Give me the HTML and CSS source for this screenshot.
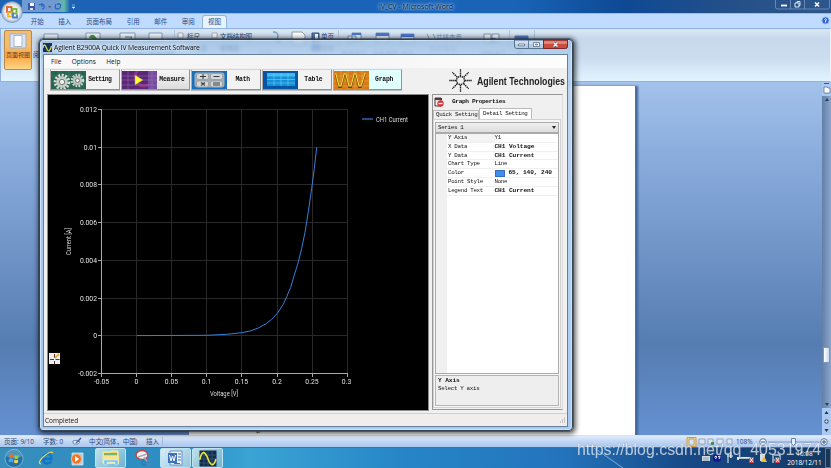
FILE: index.html
```html
<!DOCTYPE html>
<html lang="zh-CN">
<head>
<meta charset="utf-8">
<title>IV_CV - Microsoft Word</title>
<link rel="stylesheet" href="styles.css">
</head>
<body>
<div class="desktop">
  <header class="word-title">
    <div class="quick-access">
      <svg width="50" height="13" viewBox="0 0 50 13">
        <path d="M2 3h7v7H2z" fill="#3c55a5"/><path d="M4 3h4v3H4z" fill="#fff"/><path d="M4 8h3v2H4z" fill="#dde"/>
        <path d="M13 5l3-1v3M13 5q4-2 5 1t-2 3" fill="none" stroke="#2e63c9" stroke-width="1.3"/>
        <path d="M22 6l2 2 1-2z" fill="#456"/>
        <path d="M30 4q-2 5 1.500 5t3-5M34 4h-3" fill="none" stroke="#2e63c9" stroke-width="1.300"/>
        <path d="M46 5h3M46 7l1.500 1.500 1.500-1.500z" fill="#dfeaff" stroke="#dfeaff" stroke-width=".5"/>
      </svg>
    </div>
    <div class="word-name">IV_CV - Microsoft Word</div>
    <svg class="word-controls" width="55" height="10" viewBox="0 0 55 10">
      <path d="M.5 0v7q0 2 2 2h50q2 0 2-2V0M15.500 0v9M29.500 0v9" fill="none" stroke="#7896be" stroke-width=".8"/>
      <path d="M6 5.500h6" stroke="#fff" stroke-width="1.800"/>
      <path d="M20 3h4v4h-4zM22 3V1.500h3v4h-1" fill="none" stroke="#dbe6f4" stroke-width="1"/>
      <path d="M40 2.500l4 4M44 2.500l-4 4" stroke="#fff" stroke-width="1.500"/>
    </svg>
  </header>
  <nav class="word-tabs">
    <span>开始</span><span>插入</span><span class="wide">页面布局</span><span>引用</span><span>邮件</span><span>审阅</span><span class="active">视图</span>
    <svg class="help" width="9" height="9" viewBox="0 0 9 9"><circle cx="4.500" cy="4.500" r="3.600" fill="#2d61c8" stroke="#a0bbe8"/><path d="M3.500 3.500q1-1.500 2 0L4.500 5v1.500" fill="none" stroke="#fff"/></svg>
  </nav>
  <section class="ribbon">
    <div class="view-button"><svg width="18" height="16" viewBox="0 0 18 16"><path d="M1 1h16v14H1z" fill="#dce4f2" stroke="#9bb0cf"/><path d="M5 2.500h8v11H5z" fill="#fff" stroke="#a8b6c8"/></svg><span>页面视图</span></div>
    <div class="ribbon-rest">
      <svg width="240" height="52" viewBox="33 29 240 52">
        <g stroke="#7e98b8" fill="#eef4fb"><path d="M44 33h14v7H44zM86 32h14v8H86zM120 32h15v8h-15zM149 32h13v8h-13z"/></g>
        <path d="M89 37q1-4 5-3l4 5z" fill="#4d9e49"/><path d="M125 36h7l-3 4" fill="none" stroke="#5477a4"/>
        <path d="M174.500 29v50" stroke="#b2c9e4"/>
        <g fill="#f8f9fb" stroke="#9caabf"><path d="M178 32h5v5h-5zM212 32h5v5h-5z"/></g>
        <g class="ribbon-text"><text x="33" y="56">阅读版式</text><text x="78" y="56">Web 版式</text><text x="118" y="56">大纲视图</text><text x="149" y="56">普通视图</text><text x="187" y="38">标尺</text><text x="220" y="38" textLength="32">文档结构图</text><text x="187" y="50">网格线</text><text x="220" y="50">缩略图</text><text x="259" y="56">显示</text></g>
      </svg>
      <svg width="290" height="52" viewBox="273 29 290 52">
        <circle cx="274" cy="35" r="4" fill="#c9dff3" stroke="#809cc0" stroke-width="1.500"/><path d="M277 38l3 4" stroke="#8791a5" stroke-width="2"/>
        <path d="M292 31h10l3 3v9h-13z" fill="#fff" stroke="#8d99ab"/>
        <path d="M312 32h7v8h-7zM312 44h8v6h-8z" fill="#5879ae" stroke="#365885"/><path d="M315 33h3v6h-3z" fill="#fff"/>
        <path d="M338.500 29v50M509.500 29v50M534.500 29v50" stroke="#aec4df"/>
        <path d="M352 32h9v7h-9zM348 35h8v6h-8zM376 32h13v9h-13zM401 33h13v9h-13z" fill="#edf3fb" stroke="#7893bd"/><path d="M376 32h13v3h-13zM401 33h13v3h-13zM352 32h9v2h-9z" fill="#4878cf"/><path d="M359 38l4 2-3 2z" fill="#edbb2f"/>
        <path d="M484 33h7v8h-7zM492 33h7v8h-7z" fill="#edf3fa" stroke="#8190a5"/><path d="M490 37l6 0-2 4z" fill="#466dad"/>
        <path d="M515 35h13v7h-13z" fill="#9ab5dc" stroke="#5b7ab1"/><path d="M515 35h13v3h-13z" fill="#507cca"/>
        <path d="M427 33l2 4v3M433 33l2 4v3" fill="none" stroke="#8a9aad"/>
        <g class="ribbon-text"><text x="321" y="38">单页</text><text x="321" y="50">双页</text><text x="341" y="56">新建窗口</text><text x="372" y="56">全部重排</text><text x="401" y="56">拆分</text><text x="436" y="39" opacity=".5">并排查看</text><text x="430" y="51" opacity=".5">同步滚动</text><text x="480" y="56">切换窗口</text><text x="517" y="56">宏</text></g>
      </svg>
    </div>
  </section>
  <main class="workspace">
    <div class="canvas"><div class="page"><span>↵</span></div></div>
    <div class="scrollbar">
      <svg width="9" height="14" viewBox="0 0 9 14"><path d="M2 1h5v1H2z" fill="#456"/><path d="M2 5h3l1 1h2v5H2z" fill="#fff" stroke="#5d7292" stroke-width=".8"/></svg>
      <div class="scroll-track"><b class="arrow-up"></b><i></i><b class="arrow-down"></b></div>
      <svg width="9" height="27" viewBox="0 0 9 27"><path d="M2.500 6l2-3 2 3zM2.500 21l2 3 2-3z" fill="#22354d"/><circle cx="4.500" cy="13.500" r="1.700" fill="#e5edf6" stroke="#273b57"/></svg>
    </div>
  </main>
  <footer class="word-status">
    <span class="s-page">页面: 9/10</span><span class="s-words">字数: 0</span>
    <svg class="proof" width="20" height="12" viewBox="0 0 20 12"><path d="M4 5q3-2 7 1-3 4-7 1z" fill="#f9fcff" stroke="#667fab"/><path d="M7 7l5-5" stroke="#345bac" stroke-width="1.500"/></svg>
    <span class="s-lang">中文(简体，中国)</span><span class="s-mode">插入</span>
    <div class="view-tools">
      <svg width="50" height="12" viewBox="0 0 50 12"><path d="M1 1.500h9v9H1z" fill="#ffd589" stroke="#d79932"/><g fill="#dbe5f0" stroke="#899bb2" stroke-width=".8"><path d="M3 3h5v6H3zM13 3h6v5h-6zM22 3h5v5h-5zM31 3h6q1 3-1 5h-5zM41 3h5v5h-5z"/></g><path d="M25 6h3v3h-3z" fill="#4a8d4d"/></svg>
      <span>108%</span>
      <svg width="72" height="12" viewBox="0 0 72 12"><path d="M10 6h51" stroke="#829bc3"/><circle cx="5" cy="6" r="3.300" fill="#eef4fb" stroke="#60799d"/><circle cx="66" cy="6" r="3.300" fill="#eef4fb" stroke="#60799d"/><path d="M3 6h4M64 6h4M66 4v4" stroke="#34547f"/><path d="M33.500 2.500h4v5l-2 2-2-2z" fill="#e6effa" stroke="#6883a9"/></svg>
    </div>
  </footer>
  <footer class="taskbar">
    <svg class="launch" width="95" height="21" viewBox="0 0 95 21">
      <circle cx="14" cy="10.500" r="9" fill="#2571a5" stroke="#80bed9" stroke-width=".8"/><path d="M6 8a8 7 0 0 1 16 0q-8 5-16 0" fill="#82bed5" opacity=".45"/>
      <path d="M9.500 7q2-1.500 4 0v3q-2-1.500-4.500 0z" fill="#f06a2a"/><path d="M14.500 7q2 1.500 4.500 0l-1 3.500q-2 1-3.500 0z" fill="#96cf45"/><path d="M9 11q2-1.500 4.200 0v3.500q-2-1.500-4.700 0z" fill="#45a9ef"/><path d="M14.500 11.500q2 1.300 3.500 0v3q-2 1.500-4 0z" fill="#ffd247"/>
      <path d="M51.500 13.500q-5 4.500-9-1-1-5 4-6.500 5-.5 5 5h-8" fill="none" stroke="#0c78cc" stroke-width="2.300"/><path d="M41 16q-4-1 2-7 8-7 10-4" fill="none" stroke="#f4d34a" stroke-width="1.200"/>
      <path d="M72 5h11v12H72z" fill="#a8d4ed" stroke="#dceff8" stroke-width=".7"/><circle cx="76.500" cy="11" r="5" fill="#ef7426" stroke="#f9b37b"/><path d="M75 8l4 3-4 3z" fill="#fff"/>
    </svg>
    <div class="task"><svg width="20" height="18" viewBox="0 0 20 18"><path d="M2 3h7l1-1h7v12H2z" fill="#f0d267" stroke="#fff1a3"/><path d="M3 4h13v2H3z" fill="#75b477"/><path d="M4 7h14v8H2V8z" fill="#f9e494"/><path d="M3 16v-5h14v5h-3v-3H6v3z" fill="#79c4eb" stroke="#d7f3ff" stroke-width=".5"/></svg></div>
    <svg class="snip" width="34" height="21" viewBox="0 0 34 21"><ellipse cx="16" cy="7" rx="6" ry="4.500" fill="#f5f6f6" stroke="#c5434c" stroke-width="1.500"/><path d="M12 9l9-3M18 9l3 5" stroke="#9caab5" stroke-width="1.500"/><circle cx="18" cy="15" r="2" fill="none" stroke="#287bb6" stroke-width="1.300"/><circle cx="23" cy="15" r="2" fill="none" stroke="#4c87b3" stroke-width="1.300"/></svg>
    <div class="task word-task"><svg width="17" height="18" viewBox="0 0 17 18"><path d="M3 2h12v14H3z" fill="#edf4fb" stroke="#7090bc"/><path d="M1 4h9v10H1z" fill="#3b73bf"/><path d="M2.500 6l1.500 6 1.500-5 1.500 5 1.500-6" fill="none" stroke="#fff" stroke-width="1"/><path d="M11 5h3M11 8h3M11 11h3M7 14.500h6" stroke="#466ca9"/></svg></div>
    <div class="task"><svg width="18" height="17" viewBox="0 0 18 17"><path d="M.5.500h17v16H.5z" fill="#142b4c"/><path d="M5 0v17M9 0v17M13 0v17M0 5h18M0 9h18M0 13h18" stroke="#416588" stroke-width=".6"/><path d="M0 9h1C3 0 6 1 9 9s6 7 8 0" fill="none" stroke="#e8e63a" stroke-width="1.600"/></svg></div>
    <div class="tray">
      <svg width="84" height="18" viewBox="0 0 84 18"><path d="M2 7h8v5H2z" fill="#d4dbe1"/><path d="M3 9h6M3 11h6" stroke="#5b738e" stroke-width=".6"/><circle cx="17" cy="9" r="4" fill="#101a8c"/><path d="M14.500 8q2-2 2 0l-1 2M18 8q2-2 2 0l-1 2" fill="none" stroke="#fff"/><path d="M27 7h6M28 4v10M31 3v6" stroke="#e8edf2"/><path d="M37 9h12M38 8v3" stroke="#fff" stroke-width="1.500"/><path d="M49 8h5v6h-5z" fill="#d33d42"/><path d="M50 9l3 4M53 9l-3 4" stroke="#fff"/><path d="M60 5h5v7h-5z" fill="#d6dfe6"/><path d="M61 13l3-6 3 6z" fill="#ecc02b"/><path d="M73 5v9M74 6h6v5h-6" stroke="#fff" fill="none"/><path d="M75 8h5v6h-5z" fill="#d33d42"/><path d="M76 9l3 4M79 9l-3 4" stroke="#fff"/></svg>
      <div class="clock"><span>16:08</span><span>2018/12/11</span></div>
      <div class="show-desktop"></div>
    </div>
  </footer>

  <svg class="office-orb" width="24" height="24" viewBox="0 0 24 24"><defs><radialGradient id="orb"><stop stop-color="#fff"/><stop offset=".7" stop-color="#e5e8ee"/><stop offset="1" stop-color="#a3b1c4"/></radialGradient></defs><circle cx="12" cy="12" r="10.500" fill="url(#orb)" stroke="#6f8fbd" stroke-width=".7"/><g fill="none" stroke-width="1.800"><rect x="7" y="7" width="4.500" height="5" stroke="#e85d24"/><rect x="12.500" y="9" width="4" height="4.500" stroke="#74b52d"/><rect x="8" y="12.500" width="4" height="4" stroke="#f6ae20"/><path d="M13 12.500v5h4v-3" stroke="#3d85d4"/></g></svg>

  <section class="agilent">
    <header class="app-title">
      <svg width="9" height="9" viewBox="0 0 9 9"><path d="M0 0h9v9H0z" fill="#17325a"/><path d="M0 5q1-5 2.500-2l2 4q2 3 4-4" fill="none" stroke="#e2df41" stroke-width="1.200"/></svg>
      <h1>Agilent B2900A Quick IV Measurement Software</h1>
      <svg class="app-controls" width="54" height="9" viewBox="0 0 54 9"><path d="M.5 0v6q0 2.500 2 2.500h49q2 0 2-2.500V0z" fill="#b5cbe3" stroke="#58718f"/><path d="M29.500 0h24v6q0 2.500-2 2.500h-22z" fill="#cb4d3e" stroke="#752a2d"/><path d="M30 1h23v3H30z" fill="#e09a8b" opacity=".75"/><path d="M1 1h28v3H1z" fill="#e1eaf4" opacity=".6"/><path d="M14.500 0v8.500" stroke="#657d9b"/><path d="M4.500 4h6v1.800h-6zM19.500 2.500h6v4h-6zM21.500 4h2v1h-2z" fill="#fff" stroke="#4b5e77" stroke-width=".7"/><path d="M39.500 2.500l4 4M43.500 2.500l-4 4" stroke="#693533" stroke-width="2.600"/><path d="M39.500 2.500l4 4M43.500 2.500l-4 4" stroke="#fff" stroke-width="1.500"/></svg>
    </header>
    <div class="client">
      <nav class="menu"><span>File</span><span>Options</span><span>Help</span></nav>
      <div class="toolbar">
        <div class="tool"><svg width="35" height="18" viewBox="0 0 35 18"><path d="M0 0h35v18H0z" fill="#276652"/><path d="M0 5h35M0 11h35M8 0v18M18 0v18M29 0v18" stroke="#4a8970" stroke-width=".5"/><circle cx="11" cy="11" r="6.800" fill="none" stroke="#dedfda" stroke-width="3" stroke-dasharray="2 1.500"/><circle cx="11" cy="11" r="5.700" fill="#c7ccc6"/><circle cx="11" cy="11" r="2.700" fill="#eef0ed" stroke="#758078"/><circle cx="26.500" cy="9.500" r="5.500" fill="none" stroke="#d3d8d3" stroke-width="2.500" stroke-dasharray="1.700 1.200"/><circle cx="26.500" cy="9.500" r="4.600" fill="#bec7be"/><circle cx="26.500" cy="9.500" r="2" fill="#eceeeb" stroke="#6d7c72"/></svg><span class="tight">Setting</span></div>
        <div class="tool hover"><svg width="35" height="18" viewBox="0 0 35 18"><path d="M0 0h35v18H0z" fill="#592775"/><circle cx="22" cy="6" r="9" fill="none" stroke="#a9368c" stroke-width="3" opacity=".7"/><path d="M26 0v18h9V0z" fill="#764c9e"/><path d="M0 5h35M0 9h35M0 14h35M6 0v18M30 0v18" stroke="#a076bb" stroke-width=".5"/><path d="M13 4l8 5-8 5z" fill="#ffff3b" stroke="#a48a54" stroke-width=".5"/></svg><span>Measure</span></div>
        <div class="tool"><svg width="35" height="18" viewBox="0 0 35 18"><path d="M0 0h35v18H0z" fill="#1870bd"/><rect x="2.500" y="1.500" width="30" height="15" rx="3" fill="#a8adb1"/><g fill="#d5d7d8" stroke="#858e94" stroke-width=".6"><rect x="4.500" y="2.500" width="12" height="6" rx="2"/><rect x="18.500" y="2.500" width="12" height="6" rx="2"/><rect x="4.500" y="10" width="12" height="6" rx="2"/><rect x="18.500" y="10" width="12" height="6" rx="2"/></g><path d="M8 5.500h6M11 3v5M21.500 5.500h6M9 11.500l4 3M13 11.500l-4 3M21 12h7M21 14h7" stroke="#353c42" stroke-width="1.100"/></svg><span>Math</span></div>
        <div class="tool"><svg width="35" height="18" viewBox="0 0 35 18"><path d="M0 0h35v18H0z" fill="#0754a3"/><path d="M4 2h28v13H4z" fill="#158fd7"/><path d="M4 2h28v3H4z" fill="#3bb9ea"/><path d="M4 5h28M4 8.500h28M4 12h28M11 2v13M18 2v13M25 2v13" stroke="#66d5f3" stroke-width=".6"/></svg><span>Table</span></div>
        <div class="tool selected"><svg width="35" height="18" viewBox="0 0 35 18"><path d="M0 0h35v18H0z" fill="#da7918"/><path d="M0 5h35M0 10h35M0 15h35M7 0v18M14 0v18M21 0v18M28 0v18" stroke="#edb14c" stroke-width=".5"/><path d="M1 4h1l3 12h2l3-12h2l3 12h2l3-12h2l3 12h2l4-13" fill="none" stroke="#594519" stroke-width="1.800"/><path d="M1 3h1l3 12h2l3-12h2l3 12h2l3-12h2l3 12h2l4-13" fill="none" stroke="#ffdc31" stroke-width="1.200"/></svg><span>Graph</span></div>
        <svg class="brand" width="118" height="24" viewBox="448 69 118 24"><g stroke="#181818" stroke-width="1.300" stroke-dasharray="1.500 .6"><path d="M460.500 76V69M460.500 85v7M456 80.500h-7M465 80.500h7"/><path d="M457.300 77.300l-5-5M463.700 77.300l5-5M457.300 83.700l-5 5M463.700 83.700l5 5"/></g><circle cx="460.500" cy="80.500" r="4" fill="none" stroke="#222" stroke-width="1.400" stroke-dasharray="1.500 .7"/><text x="477" y="84.500" textLength="88" lengthAdjust="spacingAndGlyphs">Agilent Technologies</text></svg>
      </div>
      <div class="body">
        <svg class="plot" width="380" height="315" viewBox="48 95 380 315">
          <g stroke="#292929"><path d="M136.500 109v265M171.500 109v265M206.500 109v265M241.500 109v265M277.500 109v265M312.500 109v265M347.500 109v265M101 109.500h246M101 147.500h246M101 184.500h246M101 222.500h246M101 260.500h246M101 298.500h246M101 335.500h246"/></g>
          <path d="M101.500 109v268M98 373.500h249.500M98 109.500h4M98 147.500h4M98 184.500h4M98 222.500h4M98 260.500h4M98 298.500h4M98 335.500h4M136.500 373v4M171.500 373v4M206.500 373v4M241.500 373v4M277.500 373v4M312.500 373v4M347.500 373v4" fill="none" stroke="#aaa"/>
          <path d="M136.700 335.600L206.500 335.300 226.700 334.300 241.700 332.700 250 331 258.300 328 266.700 323.300 271.700 319.300 277.300 313.300 283.300 304.300 286.700 296.700 290.700 287.300 294.300 275 297.700 264.300 301.700 248.300 305 232.300 308.300 211.700 311.700 188.300 314.300 168.300 316.700 147.300" fill="none" stroke="#387fd8"/>
          <g class="y-labels"><text x="97" y="112">0.012</text><text x="97" y="149.700">0.01</text><text x="97" y="187.300">0.008</text><text x="97" y="225">0.006</text><text x="97" y="263">0.004</text><text x="97" y="300.700">0.002</text><text x="97" y="338">0</text><text x="97" y="376">-0.002</text></g>
          <g class="x-labels"><text x="101.500" y="384">-0.05</text><text x="136.500" y="384">0</text><text x="171.500" y="384">0.05</text><text x="206.500" y="384">0.1</text><text x="241.500" y="384">0.15</text><text x="277" y="384">0.2</text><text x="312" y="384">0.25</text><text x="346.500" y="384">0.3</text></g>
          <text class="axis-title" x="210" y="395.500" textLength="28" lengthAdjust="spacingAndGlyphs">Voltage [V]</text>
          <text class="axis-title" transform="translate(70.500 255) rotate(-90)" textLength="27" lengthAdjust="spacingAndGlyphs">Current [A]</text>
          <path d="M362 119h11" stroke="#387fd8" stroke-width="1.200"/><text class="axis-title" x="376" y="121.500" textLength="32" lengthAdjust="spacingAndGlyphs">CH1 Current</text>
          <path d="M49 353h11v11H49z" fill="#eee"/><path d="M50 359.500h4M55.500 359.500h4M54.500 354v4M54.500 361v3" stroke="#6c2b2b"/><path d="M55 358l4-4" stroke="#e5b127" stroke-width="2"/>
        </svg>
        <aside class="properties">
          <div class="prop-title"><svg width="10" height="10" viewBox="0 0 10 10"><path d="M1 1h6v8H1z" fill="#eee" stroke="#493345"/><path d="M1 1h7v2H1z" fill="#593641"/><circle cx="6.500" cy="6.500" r="3.200" fill="#d83838"/><path d="M4.500 6.500h4" stroke="#fff" stroke-width="1.300"/></svg><h2>Graph Properties</h2></div>
          <div class="prop-tabs"><span>Quick Setting</span><span class="current">Detail Setting</span></div>
          <div class="tab-body">
            <div class="combo"><span>Series 1</span><b></b></div>
            <div class="grid">
              <div class="row first"><span>Y Axis</span><em>Y1</em></div>
              <div class="row"><span>X Data</span><strong>CH1 Voltage</strong></div>
              <div class="row"><span>Y Data</span><strong>CH1 Current</strong></div>
              <div class="row"><span>Chart Type</span><em>Line</em></div>
              <div class="row"><span>Color</span><i class="swatch"></i><strong>65, 140, 240</strong></div>
              <div class="row"><span>Point Style</span><em>None</em></div>
              <div class="row"><span>Legend Text</span><strong>CH1 Current</strong></div>
            </div>
            <div class="description"><strong>Y Axis</strong><span>Select Y axis</span></div>
          </div>
        </aside>
      </div>
      <footer class="app-status"><span>Completed</span><svg width="7" height="7" viewBox="0 0 7 7"><path d="M5 1h1M3 3h1M5 3h1M1 5h1M3 5h1M5 5h1" stroke="#9b9b9b" stroke-width="1.200"/></svg></footer>
    </div>
  </section>
  <svg class="watermark" width="250" height="22" viewBox="0 0 250 22"><text x="1" y="15" textLength="244" lengthAdjust="spacingAndGlyphs">https://blog.csdn.net/qq_40531974</text></svg>
</div>
</body>
</html>
```
FILE: styles.css
```css
* { box-sizing: border-box; }
body { margin: 0; overflow: hidden; }
svg { display: block; flex-shrink: 0; }
span, strong, em, h1, h2 { white-space: nowrap; }
.desktop {
  position: relative;
  width: 831px;
  height: 468px;
  display: flex;
  flex-direction: column;
  overflow: hidden;
  font-family: "Open Sans", "Noto Sans CJK SC", sans-serif;
  font-size: 6.5px;
}

.word-title {
  height: 13px;
  display: flex;
  align-items: flex-start;
  background: linear-gradient(90deg, #1d62b4, #1a63b9 30%, #1964b7 62%, #0e4994 75%, #245089 88%, #2d568c);
}
.quick-access {
  width: 68px;
  height: 12px;
  margin-left: 22px;
  padding-left: 4px;
  border-radius: 0 0 8px 0;
  background: linear-gradient(90deg, #6f9bd2 0 34px, #61b9a4 42px, transparent 48px);
}
.word-name {
  width: 80px;
  margin-left: 286px;
  text-align: center;
  font-size: 7px;
  line-height: 13px;
  white-space: nowrap;
  color: #0b1a30;
  text-shadow: 0 0 2px #a9c5e8, 0 0 3px #a9c5e8, 0 0 5px #a9c5e8;
}
.word-controls { margin-left: 319px; }

.word-tabs {
  height: 15px;
  padding-left: 23.5px;
  display: flex;
  align-items: flex-end;
  background: #bfdbff;
  border-top: 1px solid #9bbce8;
  color: #294d87;
  line-height: 13px;
}
.word-tabs span { width: 27.5px; text-align: center; }
.word-tabs .wide { width: 41px; }
.word-tabs .active { width: 25px; line-height: 12px; background: #e9f3fd; border: 1px solid #93b5df; border-bottom: 0; border-radius: 3px 3px 0 0; }
.help { margin: 0 1px 3px auto; }

.ribbon {
  height: 54px;
  display: flex;
  padding: 1px 1px 0 3px;
  border: 1px solid #8db2e3;
  border-right-color: #e7f2ff;
  background: linear-gradient(#dbe7f4, #c9d9ed 18%, #cbdcef 55%, #e2f4ff);
}
.view-button {
  width: 28px;
  height: 40px;
  display: flex;
  flex-direction: column;
  align-items: center;
  gap: 1px;
  padding-top: 2px;
  border: 1px solid #b48a4f;
  border-radius: 2px;
  background: linear-gradient(#f3bc70, #f7bd68 40%, #faa43f 65%, #fbd686);
  color: #51452f;
  font-size: 6px;
}
.ribbon-rest { display: flex; margin-left: 1px; }
.ribbon-text { font-size: 6.5px; fill: #27436e; }

.workspace { height: 353px; display: flex; }
.canvas {
  flex: 1;
  padding: 4px 0 0 189px;
  background: linear-gradient(#a3c2eb, #8badde 20%, #567db1 74%, #6591d1);
}
.page {
  width: 447px;
  height: 349px;
  background: #fff;
  border-right: 1px solid #5c6f8d;
  box-shadow: 2px 0 2px #41669a;
  display: flex;
  align-items: flex-end;
  padding-left: 67px;
  color: #444;
}
.page span { font-size: 6px; line-height: 6px; }
.scrollbar { width: 9px; background: #a9c8f2; display: flex; flex-direction: column; }
.scroll-track { flex: 1; display: flex; flex-direction: column; align-items: center; background: linear-gradient(90deg, #627fa8, #8aa5ca); }
.scroll-track i { width: 7px; height: 16px; margin-top: 246px; border: 1px solid #7c98bb; background: linear-gradient(90deg, #fff, #c8d9ed); }
.arrow-up, .arrow-down { width: 0; height: 0; border: 2px solid transparent; }
.arrow-up { border-bottom: 3px solid #263e61; }
.arrow-down { margin-top: auto; border-top: 3px solid #263e61; }

.word-status {
  height: 12px;
  display: flex;
  align-items: center;
  padding-left: 4px;
  background: linear-gradient(#e1ecfc, #c3d8f5 45%, #aac7ef);
  border-top: 1px solid #d2e3fa;
  color: #294875;
  line-height: 10px;
}
.s-page { width: 39px; }
.s-words { width: 26px; }
.s-lang { width: 57px; letter-spacing: -.1px; }
.s-mode { width: 17px; border-right: 1px solid #a3bee1; }
.view-tools { margin-left: auto; padding-right: 1px; display: flex; align-items: center; }
.view-tools span { width: 22px; font-size: 6.5px; }

.taskbar {
  height: 21px;
  display: flex;
  align-items: center;
  border-top: 1px solid #456f9d;
  background:
    linear-gradient(35deg, transparent 69%, rgba(184,222,255,.5) 70%, transparent 72%) 540px 0 / 90px 21px no-repeat,
    linear-gradient(90deg, #378dbb, #2a8fc4 22%, #3ba4d4 30%, #2786c7 48%, #2373bc 68%, #174a88 82%, #123963);
}
.task {
  width: 31px;
  height: 20px;
  display: flex;
  align-items: center;
  justify-content: center;
  border: 1px solid #c0e3f1;
  border-radius: 2px;
  background: linear-gradient(135deg, #bfe0ea, #6eb3d1);
}
.word-task { margin-right: 1px; background: linear-gradient(135deg, #d8ecf5, #94c6df); }
.tray { margin-left: auto; display: flex; align-items: center; gap: 2px; color: #fff; }
.clock { width: 37px; display: flex; flex-direction: column; align-items: center; font-size: 6.5px; line-height: 9px; }
.show-desktop { width: 6px; height: 20px; border: 1px solid #5b7591; background: #193655; }
.office-orb { position: absolute; left: 0; top: 0; }

.agilent {
  position: absolute;
  left: 39px;
  top: 39px;
  width: 534px;
  height: 392px;
  padding: 1px 4px 4px 3px;
  border: 1px solid #354350;
  border-radius: 4px;
  background: linear-gradient(180deg, rgba(153,187,223,.72), rgba(177,207,239,.84) 15px, #a8cbf0);
  backdrop-filter: blur(1.5px);
  box-shadow: 0 0 0 .5px #273543, 1px 1px 5px 2px rgba(0,0,0,.6), inset 0 0 0 1px rgba(222,240,255,.65);
}
.app-title { height: 13px; display: flex; align-items: center; }
.app-title h1 { margin: 0 0 0 2px; font-size: 6.8px; font-weight: 400; color: #101010; letter-spacing: -.13px; text-shadow: 0 0 4px #fff, 0 0 5px #fff; }
.app-controls { align-self: flex-start; margin: -1px 0 0 auto; }
.client { height: 373px; display: flex; flex-direction: column; background: #f0f0f0; border: 1px solid #667f9b; color: #111; }
.menu { height: 13px; padding: 0 7px; display: flex; align-items: center; gap: 10.5px; background: linear-gradient(90deg, #fafafa, #f3f3f3 45%, #fdfdfd); }
.toolbar { height: 27px; padding: 1px 0 0 6px; display: flex; gap: 1px; }
.tool {
  width: 69.7px;
  height: 21px;
  display: flex;
  align-items: center;
  border: 1px solid;
  border-color: #d4d4d4 #929292 #929292 #aaa;
  box-shadow: 0 1px 0 #bbb;
  background: #f2f2f2;
}
.tool span { flex: 1; text-align: center; font: bold 6.4px/8px "Liberation Mono", monospace; letter-spacing: -.2px; padding-right: 2px; }
.tool span.tight { letter-spacing: -.55px; padding-right: 5px; }
.tool.hover { background: linear-gradient(#f5f5f5, #ddd); }
.tool.selected { background: #e0ffff; }
.brand { margin-left: 45px; overflow: visible; }
.brand text { font: bold 10.5px "Liberation Sans", sans-serif; fill: #222; }
.body { height: 318px; display: flex; gap: 4px; padding-left: 4px; }
.plot { background: #000; outline: 1px solid #8b8b8b; }
.y-labels, .x-labels { font: 6.8px Roboto, "Liberation Sans", sans-serif; fill: #e2e2e2; }
.y-labels { text-anchor: end; }
.x-labels { text-anchor: middle; }
.axis-title { font: 6.4px Roboto, "Liberation Sans", sans-serif; fill: #ddd; }

.properties {
  width: 131px;
  height: 316px;
  margin-top: -1px;
  border: 1px solid #969696;
  border-right-color: #ddd;
  font: 5.8px/8px "Liberation Mono", monospace;
  letter-spacing: -.3px;
}
.prop-title { height: 13px; display: flex; align-items: center; padding-left: 1px; gap: 8px; }
.prop-title h2 { margin: 0; font-size: 6.2px; letter-spacing: -.38px; }
.prop-tabs { height: 11px; display: flex; align-items: flex-end; }
.prop-tabs span { width: 46px; height: 9px; padding-left: 2px; border: 1px solid #bbb; border-bottom: 0; }
.prop-tabs .current { width: 53px; height: 11px; padding: 1px 0 0 3px; background: #fff; }
.tab-body { width: 128px; height: 289px; padding: 2px 1px; border: 1px solid #d2d2d2; background: #f6f6f6; }
.combo { height: 11px; display: flex; align-items: center; justify-content: space-between; padding: 0 2px; border: 1px solid #aaa; background: linear-gradient(#efefef, #ddd); }
.combo b { border: 2px solid transparent; border-top: 3px solid #222; border-bottom: 0; }
.grid { height: 241px; border: 1px solid #aaa; background: linear-gradient(90deg, #f0f0f0 11px, #fff 11px); }
.row { height: 8.8px; display: flex; align-items: center; padding-left: 12px; border-bottom: 1px solid #f0f0f0; }
.row span { width: 46.5px; }
.row.first span { background: #f3f3f3; }
.row em { font-style: normal; }
.row strong, .description strong { font-size: 6.2px; letter-spacing: -.1px; }
.swatch { width: 10px; height: 7px; margin-right: 4px; background: #418cf0; border: 1px solid #346eb8; }
.description { height: 31px; margin-top: 1px; padding: 1px 2px; display: flex; flex-direction: column; border: 1px solid #b5b5b5; background: #eee; }
.app-status { flex: 1; display: flex; align-items: center; justify-content: space-between; padding: 0 1px; border-top: 1px solid #cfcfcf; background: #f1eded; }
.watermark { position: absolute; left: 576px; top: 440px; }
.watermark text { font: 16px "Liberation Sans", sans-serif; fill: rgba(255,255,255,.68); stroke: rgba(70,90,115,.45); stroke-width: .5px; paint-order: stroke; }
```
